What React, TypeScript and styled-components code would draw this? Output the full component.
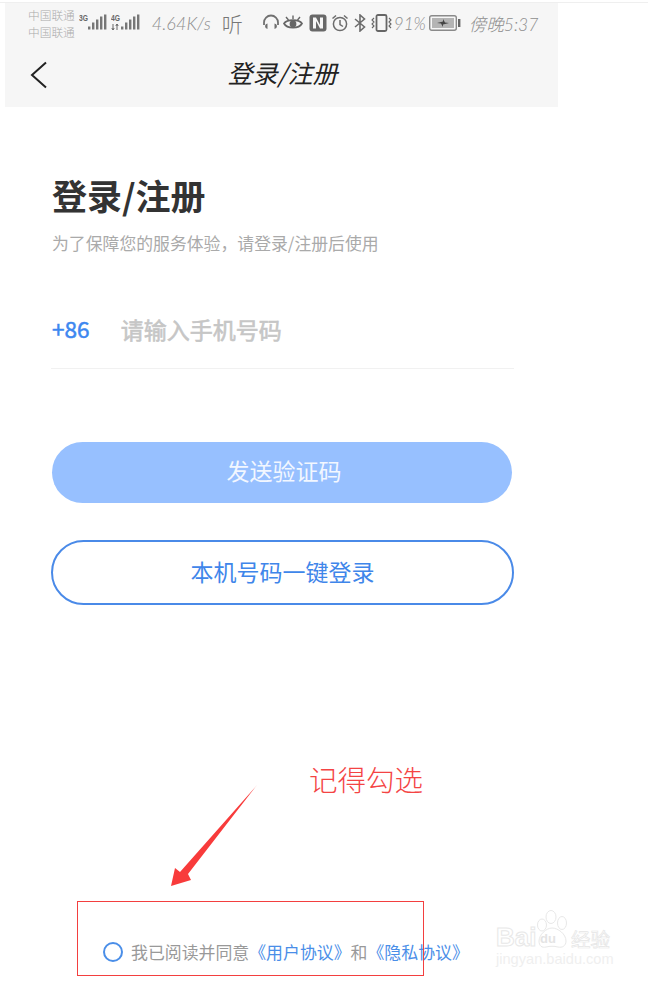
import React from "react";
import styled, { createGlobalStyle } from "styled-components";

const Global = createGlobalStyle`
  html, body { margin: 0; padding: 0; background: #fff; }
  body { font-family: "Noto Sans CJK SC", "Liberation Sans", sans-serif; }
`;
const Page = styled.div`
  position: relative;
  width: 648px;
  height: 981px;
  overflow: hidden;
  background: #fff;
  padding-top: 2px;
  box-sizing: border-box;
`;
const TopRule = styled.div`
  height: 1px;
  background: #efefef;
`;
const Header = styled.header`
  margin-left: 5px;
  width: 553px;
  height: 104px;
  background: #f6f6f6;
  display: flex;
  flex-direction: column;
`;
const StatusBar = styled.div`
  height: 40px;
  padding-left: 23px;
  display: flex;
  align-items: center;
  color: #8a8a8a;
`;
const Carrier = styled.div`
  display: flex;
  flex-direction: column;
  gap: 4px;
  font-size: 11.7px;
  line-height: 13px;
  font-weight: 300;
  color: #ababab;
  margin-top: -1px;
`;
const Slot = styled.span<{ $left: number }>`
  display: inline-flex;
  align-items: center;
  margin-left: ${(p) => p.$left}px;
`;
const Speed = styled(Slot)`
  font-family: "Lato", sans-serif;
  font-style: italic;
  font-weight: 300;
  font-size: 18px;
  color: #8e8e8e;
`;
const Listen = styled(Slot)`
  font-size: 21px;
  line-height: 24px;
  font-weight: 300;
  color: #777;
`;
const Percent = styled(Slot)`
  font-family: "Lato", sans-serif;
  font-style: italic;
  font-weight: 300;
  font-size: 17px;
  color: #8e8e8e;
`;
const Clock = styled(Slot)`
  font-size: 17.5px;
  font-style: italic;
  font-weight: 300;
  color: #8e8e8e;
  font-family: "Lato", "Noto Sans CJK SC", sans-serif;
`;
const NavBar = styled.nav`
  flex: 1;
  display: grid;
  grid-template-columns: 1fr auto 1fr;
  align-items: center;
  padding: 0 25px;
  margin-top: -6px;
`;
const BackIcon = styled.svg`
  margin-top: 6px;
`;
const NavTitle = styled.h2`
  margin: 0;
  font-size: 25px;
  line-height: 30px;
  font-weight: 400;
  font-style: italic;
  color: #222;
  transform: translateX(1px);
`;
const Main = styled.main`
  margin-left: 51px;
  width: 463px;
  padding-top: 68px;
`;
const Title = styled.h1`
  margin: 0 0 0 1px;
  font-size: 35px;
  line-height: 40px;
  font-weight: 700;
  color: #333;
`;
const Subtitle = styled.p`
  margin: 16px 0 0 1px;
  font-size: 16.85px;
  line-height: 24px;
  color: #aaa;
`;
const PhoneRow = styled.div`
  margin-top: 58px;
  padding: 0 0 23px 1px;
  display: flex;
  align-items: center;
  gap: 31px;
  border-bottom: 1px solid #f1f1f1;
  height: 32px;
`;
const Code = styled.span`
  font-size: 22.6px;
  line-height: 32px;
  color: #3d87f0;
  -webkit-text-stroke: 0.5px #3d87f0;
`;
const Placeholder = styled.span`
  font-size: 23px;
  line-height: 32px;
  color: #c6c6c6;
  -webkit-text-stroke: 0.6px #c6c6c6;
`;
const PrimaryButton = styled.button`
  display: block;
  margin: 73px 0 0 1px;
  width: 460px;
  height: 61px;
  border: none;
  border-radius: 31px;
  background: #97c0ff;
  color: #f2f7ff;
  font: 400 23px/1 "Noto Sans CJK SC", sans-serif;
  padding: 0 0 4px 4px;
`;
const OutlineButton = styled.button`
  display: block;
  margin: 37px 0 0 0;
  width: 463px;
  height: 65px;
  box-sizing: border-box;
  border: 2px solid #4a8ae8;
  border-radius: 33px;
  background: #fff;
  color: #3f86ea;
  font: 400 23px/1 "Noto Sans CJK SC", sans-serif;
  padding: 0 0 2px;
`;
const Agreement = styled.div`
  margin: 335px 0 0 52px;
  display: flex;
  align-items: center;
  gap: 8px;
  white-space: nowrap;
  font-size: 16.9px;
  line-height: 24px;
  color: #999;
`;
const Radio = styled.span`
  width: 20px;
  height: 20px;
  box-sizing: border-box;
  border: 2px solid #4a8ee8;
  border-radius: 50%;
  flex: none;
`;
const Link = styled.span`
  color: #4a8ee8;
`;
const CheckNote = styled.div`
  position: absolute;
  left: 309px;
  top: 758px;
  font-size: 28.5px;
  line-height: 42px;
  font-weight: 300;
  color: #f44444;
  white-space: nowrap;
`;
const ArrowMark = styled.svg`
  position: absolute;
  left: 165px;
  top: 780px;
`;
const RedBox = styled.div`
  position: absolute;
  left: 77px;
  top: 901px;
  width: 347px;
  height: 75px;
  box-sizing: border-box;
  border: 1px solid #f33f3f;
  pointer-events: none;
`;
const Watermark = styled.div`
  position: absolute;
  left: 496px;
  top: 910px;
  width: 120px;
  height: 58px;
`;
const WmBai = styled.span`
  position: absolute;
  left: 0;
  top: 12px;
  font: 700 26px/30px "Liberation Sans", sans-serif;
  color: #fff;
  -webkit-text-stroke: 1px #e8e8e8;
`;
const WmPaw = styled.svg`
  position: absolute;
  left: 38px;
  top: 0;
`;
const WmDu = styled.span`
  position: absolute;
  left: 44px;
  top: 21px;
  font: 700 13px/15px "Liberation Sans", sans-serif;
  color: #e4e4e4;
`;
const WmJing = styled.span`
  position: absolute;
  left: 75px;
  top: 17px;
  font-size: 19.5px;
  line-height: 24px;
  color: #fff;
  -webkit-text-stroke: 0.7px #e6e6e6;
  white-space: nowrap;
`;
const WmUrl = styled.span`
  position: absolute;
  left: 0;
  top: 41px;
  font: 400 14.6px/17px "Liberation Sans", sans-serif;
  color: #efefef;
  white-space: nowrap;
`;
const Tiny = styled.text`
  font-family: "Liberation Sans", sans-serif;
  font-weight: 700;
  font-size: 9px;
`;

const Bars = () => (
  <g fill="#777">
    <rect x="0" y="12" width="2.4" height="3" />
    <rect x="4" y="8" width="2.4" height="7" />
    <rect x="8" y="5" width="2.4" height="10" />
    <rect x="12" y="2" width="2.4" height="13" />
    <rect x="16" y="0" width="2.4" height="15" />
  </g>
);

export default function App() {
  return (
    <Page>
      <Global />
      <TopRule />
      <Header>
        <StatusBar>
          <Carrier>
            <span>中国联通</span>
            <span>中国联通</span>
          </Carrier>
          <Slot $left={4}>
            <svg width="28" height="20" viewBox="0 0 28 20">
              <Tiny x="0" y="8" fill="#666" textLength="9" lengthAdjust="spacingAndGlyphs">3G</Tiny>
              <g transform="translate(9 1.5)"><Bars /></g>
            </svg>
          </Slot>
          <Slot $left={4}>
            <svg width="30" height="20" viewBox="0 0 30 20">
              <Tiny x="0" y="8" fill="#666" textLength="9" lengthAdjust="spacingAndGlyphs">4G</Tiny>
              <path d="M2 11v6M0.8 15l1.2 2 1.2-2M6 17v-6M4.8 13L6 11l1.2 2" stroke="#666" strokeWidth="1" fill="none" />
              <g transform="translate(10 1.5)"><Bars /></g>
            </svg>
          </Slot>
          <Speed $left={11}>4.64K/s</Speed>
          <Listen $left={11}>听</Listen>
          <Slot $left={19}>
            <svg width="18" height="18" viewBox="0 0 18 18" fill="none" stroke="#707070" strokeWidth="1.8">
              <path d="M2 11V8.5a7 7 0 0 1 14 0V11" />
              <path d="M5.5 9.5v5.5A3 3 0 0 1 3 12a3 3 0 0 1 2.5-2.5zM12.5 9.5v5.5A3 3 0 0 0 15 12a3 3 0 0 0-2.5-2.5z" fill="#707070" stroke="none" />
            </svg>
          </Slot>
          <Slot $left={3}>
            <svg width="20" height="18" viewBox="0 0 20 18" fill="none" stroke="#666" strokeWidth="1.7">
              <path d="M1 9.5C4 5 16 5 19 9.5C16 15 4 15 1 9.5Z" />
              <circle cx="10" cy="10" r="3.4" fill="#666" stroke="none" />
              <path d="M3 3l2.5 3M10 1.5V5M17 3l-2.5 3" strokeWidth="1.4" />
            </svg>
          </Slot>
          <Slot $left={6}>
            <svg width="18" height="18" viewBox="0 0 18 18">
              <rect x="0.5" y="0.5" width="17" height="17" rx="3" fill="#686868" />
              <path d="M4 3.5h3l4 7.5V3.5h3v11h-3L7 7v7.5H4z" fill="#f6f6f6" />
            </svg>
          </Slot>
          <Slot $left={4}>
            <svg width="18" height="18" viewBox="0 0 18 18" fill="none" stroke="#6c6c6c" strokeWidth="1.5">
              <circle cx="9" cy="10" r="6.6" />
              <path d="M9 6v4.5l3 2M1.5 4.5L5 1.5M16.5 4.5L13 1.5" />
            </svg>
          </Slot>
          <Slot $left={5}>
            <svg width="12" height="18" viewBox="0 0 12 18" fill="none" stroke="#6c6c6c" strokeWidth="1.6">
              <path d="M1 5l9.5 8L6 17V1l4.5 4L1 13" />
            </svg>
          </Slot>
          <Slot $left={5}>
            <svg width="21" height="18" viewBox="0 0 21 18" fill="none" stroke="#666" strokeWidth="1.5">
              <rect x="5.5" y="1" width="10" height="16" rx="1.5" strokeWidth="1.8" />
              <path d="M3 4l-2 2 2 2-2 2 2 2-2 2M18 4l2 2-2 2 2 2-2 2 2 2" strokeWidth="1.1" />
            </svg>
          </Slot>
          <Percent $left={2}>91%</Percent>
          <Slot $left={3}>
            <svg width="32" height="16" viewBox="0 0 32 16">
              <rect x="0.7" y="0.7" width="26.6" height="14.6" rx="2" fill="#f6f6f6" stroke="#8a8a8a" strokeWidth="1.4" />
              <rect x="3" y="3" width="22" height="10" fill="#b4b4b4" />
              <path d="M8 8l6-1.5V4l2 3.5 4 .5-6 1.5V12l-2-3.5z" fill="#444" />
              <rect x="29" y="4" width="2.4" height="8" fill="#666" />
            </svg>
          </Slot>
          <Clock $left={8}>傍晚5:37</Clock>
        </StatusBar>
        <NavBar>
          <BackIcon width="18" height="28" viewBox="0 0 18 28" fill="none" stroke="#222" strokeWidth="2">
            <path d="M16 1.5L2 14l14 12.5" />
          </BackIcon>
          <NavTitle>登录/注册</NavTitle>
          <span />
        </NavBar>
      </Header>
      <Main>
        <Title>登录/注册</Title>
        <Subtitle>为了保障您的服务体验，请登录/注册后使用</Subtitle>
        <PhoneRow>
          <Code>+86</Code>
          <Placeholder>请输入手机号码</Placeholder>
        </PhoneRow>
        <PrimaryButton>发送验证码</PrimaryButton>
        <OutlineButton>本机号码一键登录</OutlineButton>
        <Agreement>
          <Radio />
          <span>
            我已阅读并同意<Link>《用户协议》</Link>和<Link>《隐私协议》</Link>
          </span>
        </Agreement>
      </Main>
      <CheckNote>记得勾选</CheckNote>
      <ArrowMark width="100" height="112" viewBox="165 780 100 112">
        <polygon points="257,785 188,874 191,880 171,886 175,868 180,872" fill="#f83b3b" />
      </ArrowMark>
      <RedBox />
      <Watermark>
        <WmBai>Bai</WmBai>
        <WmPaw width="38" height="40" viewBox="0 0 38 40" fill="#fff" stroke="#e8e8e8" strokeWidth="1">
          <ellipse cx="8" cy="15" rx="4.5" ry="6" />
          <ellipse cx="17" cy="7" rx="5" ry="6.5" />
          <ellipse cx="28" cy="13" rx="4.5" ry="6.5" />
          <path d="M18 18c6 0 14 6 14 13 0 5-4 7-8 6-4-1-8-1-12 0-4 1-7-1-7-6 0-6 7-13 13-13z" />
        </WmPaw>
        <WmDu>du</WmDu>
        <WmJing>经验</WmJing>
        <WmUrl>jingyan.baidu.com</WmUrl>
      </Watermark>
    </Page>
  );
}
